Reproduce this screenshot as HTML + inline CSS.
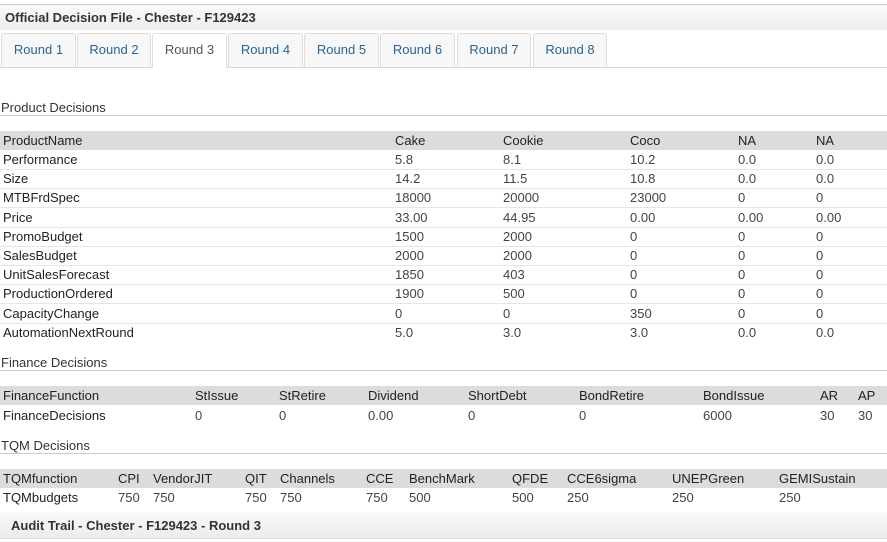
<!DOCTYPE html>
<html><head><style>
body{margin:0;width:887px;height:542px;background:#fff;font-family:"Liberation Sans",Arial,sans-serif;font-size:13px;color:#333;position:relative;overflow:hidden}
.a{position:absolute;white-space:nowrap;line-height:15px}
.bar{position:absolute;left:0;width:887px;background:linear-gradient(#fafafa,#ececec);}
.tab{position:absolute;top:33px;height:34px;border:1px solid #ddd;border-bottom:none;border-radius:3px 3px 0 0;background:#f7f7f7;color:#2a6496;line-height:32px;text-align:center;box-sizing:border-box}
.hl{position:absolute;left:0;width:887px;height:1px;background:#d8d8d8}
.g{position:absolute;left:0;width:887px;background:#dcdcdc}
.lb{color:#222}
.v{color:#444}
</style></head><body>
<div class="hl" style="top:4px;background:#ccc"></div>
<div class="bar" style="top:5px;height:25px"></div>
<div class="a" style="left:5px;top:10px;font-weight:bold;color:#333">Official Decision File - Chester - F129423</div>
<div class="hl" style="top:67px"></div>
<div class="tab" style="left:1px;width:75px">Round 1</div>
<div class="tab" style="left:77px;width:74px">Round 2</div>
<div class="tab" style="left:152px;width:75px;background:#fff;color:#555;height:35px">Round 3</div>
<div class="tab" style="left:228px;width:75px">Round 4</div>
<div class="tab" style="left:304px;width:75px">Round 5</div>
<div class="tab" style="left:380px;width:75px">Round 6</div>
<div class="tab" style="left:457px;width:74px">Round 7</div>
<div class="tab" style="left:533px;width:74px">Round 8</div>

<div class="a" style="left:1px;top:100px;color:#333">Product Decisions</div>
<div class="hl" style="top:115px;background:#ccc"></div>
<div class="g" style="top:131px;height:19px"></div>
<div class="a lb" style="left:3px;top:133px">ProductName</div>
<div class="a lb" style="left:395px;top:133px">Cake</div>
<div class="a lb" style="left:503px;top:133px">Cookie</div>
<div class="a lb" style="left:630px;top:133px">Coco</div>
<div class="a lb" style="left:738px;top:133px">NA</div>
<div class="a lb" style="left:816px;top:133px">NA</div>

<div id="rows"></div>
<script>
var r=[["Performance","5.8","8.1","10.2","0.0","0.0"],["Size","14.2","11.5","10.8","0.0","0.0"],["MTBFrdSpec","18000","20000","23000","0","0"],["Price","33.00","44.95","0.00","0.00","0.00"],["PromoBudget","1500","2000","0","0","0"],["SalesBudget","2000","2000","0","0","0"],["UnitSalesForecast","1850","403","0","0","0"],["ProductionOrdered","1900","500","0","0","0"],["CapacityChange","0","0","350","0","0"],["AutomationNextRound","5.0","3.0","3.0","0.0","0.0"]];
var xs=[3,395,503,630,738,816],h="";
r.forEach(function(row,i){var t=152+i*19.2;row.forEach(function(c,j){h+='<div class="a '+(j?'v':'lb')+'" style="left:'+xs[j]+'px;top:'+t+'px">'+c+'</div>'});if(i<9)h+='<div class="hl" style="top:'+(t+17)+'px;background:#e6e6e6"></div>';});
document.getElementById('rows').innerHTML=h;
</script>

<div class="a" style="left:1px;top:355px">Finance Decisions</div>
<div class="hl" style="top:370px;background:#ccc"></div>
<div class="g" style="top:386px;height:19px"></div>
<div class="a lb" style="left:3px;top:388px">FinanceFunction</div>
<div class="a lb" style="left:195px;top:388px">StIssue</div>
<div class="a lb" style="left:279px;top:388px">StRetire</div>
<div class="a lb" style="left:368px;top:388px">Dividend</div>
<div class="a lb" style="left:468px;top:388px">ShortDebt</div>
<div class="a lb" style="left:579px;top:388px">BondRetire</div>
<div class="a lb" style="left:703px;top:388px">BondIssue</div>
<div class="a lb" style="left:820px;top:388px">AR</div>
<div class="a lb" style="left:858px;top:388px">AP</div>
<div class="a lb" style="left:3px;top:408px">FinanceDecisions</div>
<div class="a v" style="left:195px;top:408px">0</div>
<div class="a v" style="left:279px;top:408px">0</div>
<div class="a v" style="left:368px;top:408px">0.00</div>
<div class="a v" style="left:468px;top:408px">0</div>
<div class="a v" style="left:579px;top:408px">0</div>
<div class="a v" style="left:703px;top:408px">6000</div>
<div class="a v" style="left:820px;top:408px">30</div>
<div class="a v" style="left:858px;top:408px">30</div>

<div class="a" style="left:1px;top:438px">TQM Decisions</div>
<div class="hl" style="top:453px;background:#ccc"></div>
<div class="g" style="top:469px;height:19px"></div>
<div class="a lb" style="left:3px;top:471px">TQMfunction</div>
<div class="a lb" style="left:118px;top:471px">CPI</div>
<div class="a lb" style="left:153px;top:471px">VendorJIT</div>
<div class="a lb" style="left:245px;top:471px">QIT</div>
<div class="a lb" style="left:280px;top:471px">Channels</div>
<div class="a lb" style="left:366px;top:471px">CCE</div>
<div class="a lb" style="left:409px;top:471px">BenchMark</div>
<div class="a lb" style="left:512px;top:471px">QFDE</div>
<div class="a lb" style="left:567px;top:471px">CCE6sigma</div>
<div class="a lb" style="left:672px;top:471px">UNEPGreen</div>
<div class="a lb" style="left:779px;top:471px">GEMISustain</div>
<div class="a lb" style="left:3px;top:490px">TQMbudgets</div>
<div class="a v" style="left:118px;top:490px">750</div>
<div class="a v" style="left:153px;top:490px">750</div>
<div class="a v" style="left:245px;top:490px">750</div>
<div class="a v" style="left:280px;top:490px">750</div>
<div class="a v" style="left:366px;top:490px">750</div>
<div class="a v" style="left:409px;top:490px">500</div>
<div class="a v" style="left:512px;top:490px">500</div>
<div class="a v" style="left:567px;top:490px">250</div>
<div class="a v" style="left:672px;top:490px">250</div>
<div class="a v" style="left:779px;top:490px">250</div>

<div class="bar" style="top:512px;height:26px"></div>
<div class="hl" style="top:538px;background:#ddd"></div>
<div class="a" style="left:11px;top:518px;font-weight:bold;color:#333">Audit Trail - Chester - F129423 - Round 3</div>
</body></html>
